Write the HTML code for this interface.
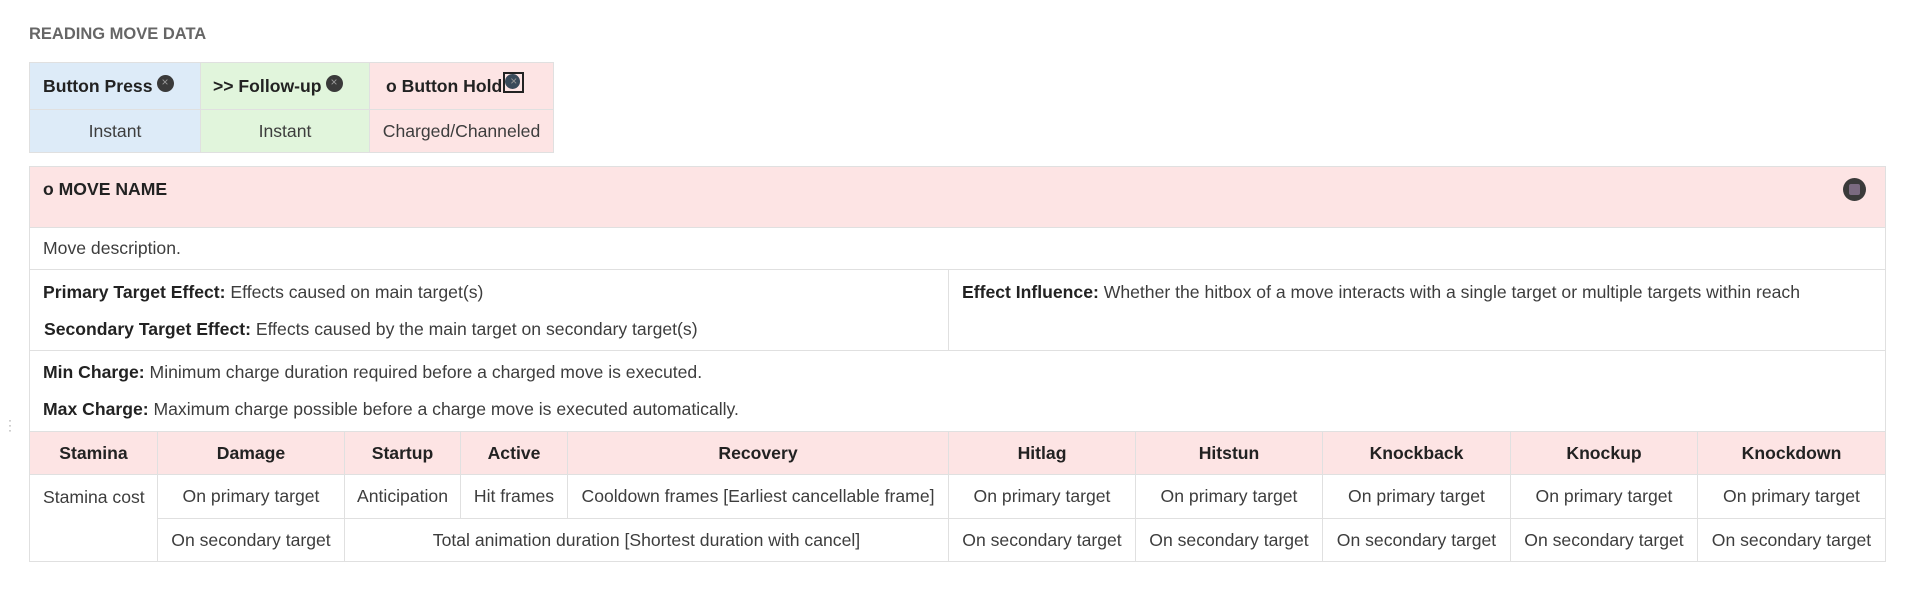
<!DOCTYPE html>
<html><head><meta charset="utf-8"><style>
*{box-sizing:border-box;margin:0;padding:0}
body{width:1920px;height:593px;background:#fff;font-family:"Liberation Sans",Arial,sans-serif;color:#3d3d3d;font-size:17.6px;position:relative;overflow:hidden}
.a{position:absolute}
.c{position:absolute;border:1px solid #e0e0e0;display:flex;align-items:center}
.ctr{justify-content:center;text-align:center}
b{font-weight:bold;color:#222}
.ic{display:inline-block;width:17px;height:17px;border-radius:50%;background:#3a3a3a;vertical-align:top;margin-left:4px;margin-top:-6px;position:relative}
.ic:after{content:"×";color:#999;font-size:12px;position:absolute;left:5px;top:1px;line-height:13px}
</style></head><body>
<div class="a" style="left:29px;top:25px;font-weight:bold;font-size:16.5px;color:#666">READING MOVE DATA</div>

<div class="c" style="left:29px;top:62px;width:172px;height:48px;background:#ddebf8;padding-left:13px"><b>Button Press</b><span class="ic"></span></div>
<div class="c" style="left:200px;top:62px;width:170px;height:48px;background:#e1f5dc;padding-left:12px"><b>&gt;&gt; Follow-up</b><span class="ic"></span></div>
<div class="c" style="left:369px;top:62px;width:185px;height:48px;background:#fde4e4;padding-left:16px"><b>o Button Hold</b><span style="display:inline-block;width:21px;height:21px;border:2px solid #222;margin-top:-8px;margin-left:1px;position:relative"><span class="ic" style="position:absolute;left:0;top:0;margin:0;width:15px;height:15px;background:#3a4a5a"></span></span></div>
<div class="c ctr" style="left:29px;top:109px;width:172px;height:44px;background:#ddebf8">Instant</div>
<div class="c ctr" style="left:200px;top:109px;width:170px;height:44px;background:#e1f5dc">Instant</div>
<div class="c ctr" style="left:369px;top:109px;width:185px;height:44px;background:#fde4e4">Charged/Channeled</div>

<div class="c" style="left:29px;top:166px;width:1857px;height:62px;background:#fde4e4;align-items:flex-start;padding:12px 13px"><b>o MOVE NAME</b></div>
<div class="a" style="left:1843px;top:178px;width:23px;height:23px;border-radius:50%;background:#3a3a3a"><div class="a" style="left:6px;top:6px;width:11px;height:11px;background:#7a6a80;border-radius:2px"></div></div>
<div class="c" style="left:29px;top:227px;width:1857px;height:43px;padding-left:13px">Move description.</div>
<div class="c" style="left:29px;top:269px;width:920px;height:82px;padding-left:13px;display:block;padding-top:13px;line-height:19px"><div><b>Primary Target Effect:</b> Effects caused on main target(s)</div><div style="margin-top:18px;padding-left:1px"><b>Secondary Target Effect:</b> Effects caused by the main target on secondary target(s)</div></div>
<div class="c" style="left:948px;top:269px;width:938px;height:82px;display:block;padding:13px 13px;line-height:19px"><b>Effect Influence:</b> Whether the hitbox of a move interacts with a single target or multiple targets within reach</div>
<div class="c" style="left:29px;top:350px;width:1857px;height:82px;display:block;padding:12px 13px;line-height:19px"><div><b>Min Charge:</b> Minimum charge duration required before a charged move is executed.</div><div style="margin-top:18px"><b>Max Charge:</b> Maximum charge possible before a charge move is executed automatically.</div></div>
<div class="a" style="left:8px;top:418px;color:#999;font-size:12px;line-height:5px">·<br>·<br>·</div>

<div class="c ctr" style="left:29px;top:431px;width:129px;height:44px;background:#fde4e4"><b>Stamina</b></div>
<div class="c ctr" style="left:157px;top:431px;width:188px;height:44px;background:#fde4e4"><b>Damage</b></div>
<div class="c ctr" style="left:344px;top:431px;width:117px;height:44px;background:#fde4e4"><b>Startup</b></div>
<div class="c ctr" style="left:460px;top:431px;width:108px;height:44px;background:#fde4e4"><b>Active</b></div>
<div class="c ctr" style="left:567px;top:431px;width:382px;height:44px;background:#fde4e4"><b>Recovery</b></div>
<div class="c ctr" style="left:948px;top:431px;width:188px;height:44px;background:#fde4e4"><b>Hitlag</b></div>
<div class="c ctr" style="left:1135px;top:431px;width:188px;height:44px;background:#fde4e4"><b>Hitstun</b></div>
<div class="c ctr" style="left:1322px;top:431px;width:189px;height:44px;background:#fde4e4"><b>Knockback</b></div>
<div class="c ctr" style="left:1510px;top:431px;width:188px;height:44px;background:#fde4e4"><b>Knockup</b></div>
<div class="c ctr" style="left:1697px;top:431px;width:189px;height:44px;background:#fde4e4"><b>Knockdown</b></div>

<div class="c" style="left:29px;top:474px;width:129px;height:88px;align-items:flex-start;padding:12px 0 0 13px">Stamina cost</div>
<div class="c ctr" style="left:157px;top:474px;width:188px;height:45px">On primary target</div>
<div class="c ctr" style="left:344px;top:474px;width:117px;height:45px">Anticipation</div>
<div class="c ctr" style="left:460px;top:474px;width:108px;height:45px">Hit frames</div>
<div class="c ctr" style="left:567px;top:474px;width:382px;height:45px">Cooldown frames [Earliest cancellable frame]</div>
<div class="c ctr" style="left:948px;top:474px;width:188px;height:45px">On primary target</div>
<div class="c ctr" style="left:1135px;top:474px;width:188px;height:45px">On primary target</div>
<div class="c ctr" style="left:1322px;top:474px;width:189px;height:45px">On primary target</div>
<div class="c ctr" style="left:1510px;top:474px;width:188px;height:45px">On primary target</div>
<div class="c ctr" style="left:1697px;top:474px;width:189px;height:45px">On primary target</div>

<div class="c ctr" style="left:157px;top:518px;width:188px;height:44px">On secondary target</div>
<div class="c ctr" style="left:344px;top:518px;width:605px;height:44px">Total animation duration [Shortest duration with cancel]</div>
<div class="c ctr" style="left:948px;top:518px;width:188px;height:44px">On secondary target</div>
<div class="c ctr" style="left:1135px;top:518px;width:188px;height:44px">On secondary target</div>
<div class="c ctr" style="left:1322px;top:518px;width:189px;height:44px">On secondary target</div>
<div class="c ctr" style="left:1510px;top:518px;width:188px;height:44px">On secondary target</div>
<div class="c ctr" style="left:1697px;top:518px;width:189px;height:44px">On secondary target</div>
</body></html>
